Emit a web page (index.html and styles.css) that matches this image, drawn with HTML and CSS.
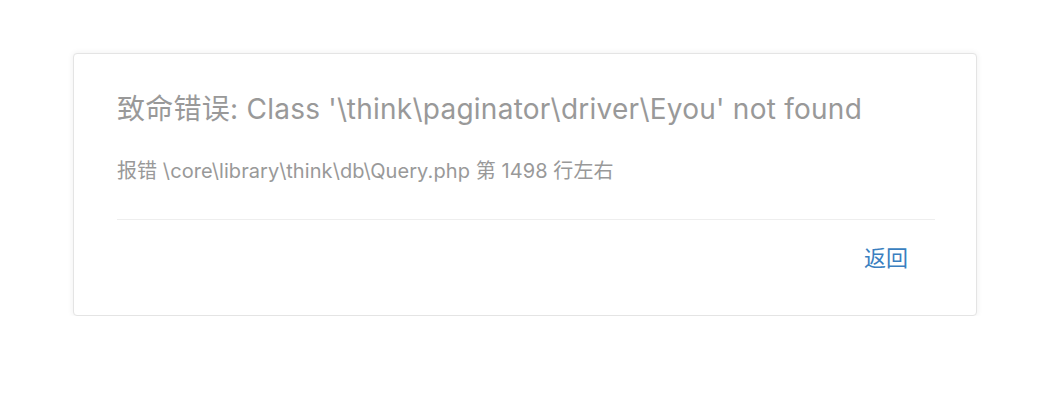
FILE: index.html
```html
<!DOCTYPE html>
<html lang="zh-CN">
<head>
	<meta charset="UTF-8">
	<title>致命错误</title>
	<link rel="stylesheet" href="styles.css">
</head>
<body>
<div class="box">
	<h1 class="title">致命错误: Class '\think\paginator\driver\Eyou' not found</h1>
	<p class="info">报错 \core\library\think\db\Query.php 第 1498 行左右</p>
	<div class="actions">
		<a class="back" href="javascript:history.back()">返回</a>
	</div>
</div>
</body>
</html>
```

FILE: styles.css
```css
body {
	margin: 0;
	padding: 53px 0 0 73px;
	background: #fff;
	font-family: Inter, "Noto Sans CJK SC", sans-serif;
}
.box {
	width: 818px;
	padding: 0 41px 0 43px;
	background: #fff;
	border: 1px solid #e4e4e4;
	border-radius: 4px;
	box-shadow: 0 0 6px rgba(0,0,0,0.07);
}
.title {
	margin: 0;
	padding-top: 35px;
	font-size: 28px;
	font-weight: normal;
	line-height: 40px;
	letter-spacing: 0.25px;
	color: #999;
	white-space: nowrap;
}
.info {
	margin: 0;
	padding: 29px 0 35px;
	font-size: 20px;
	line-height: 26px;
	letter-spacing: 0.08px;
	color: #999;
	border-bottom: 1px solid #eee;
	white-space: nowrap;
}
.actions {
	display: flex;
	justify-content: flex-end;
	padding: 24px 27px 43px 0;
}
.back {
	font-size: 22px;
	line-height: 28px;
	color: #3a7fc0;
	text-decoration: none;
}
```
